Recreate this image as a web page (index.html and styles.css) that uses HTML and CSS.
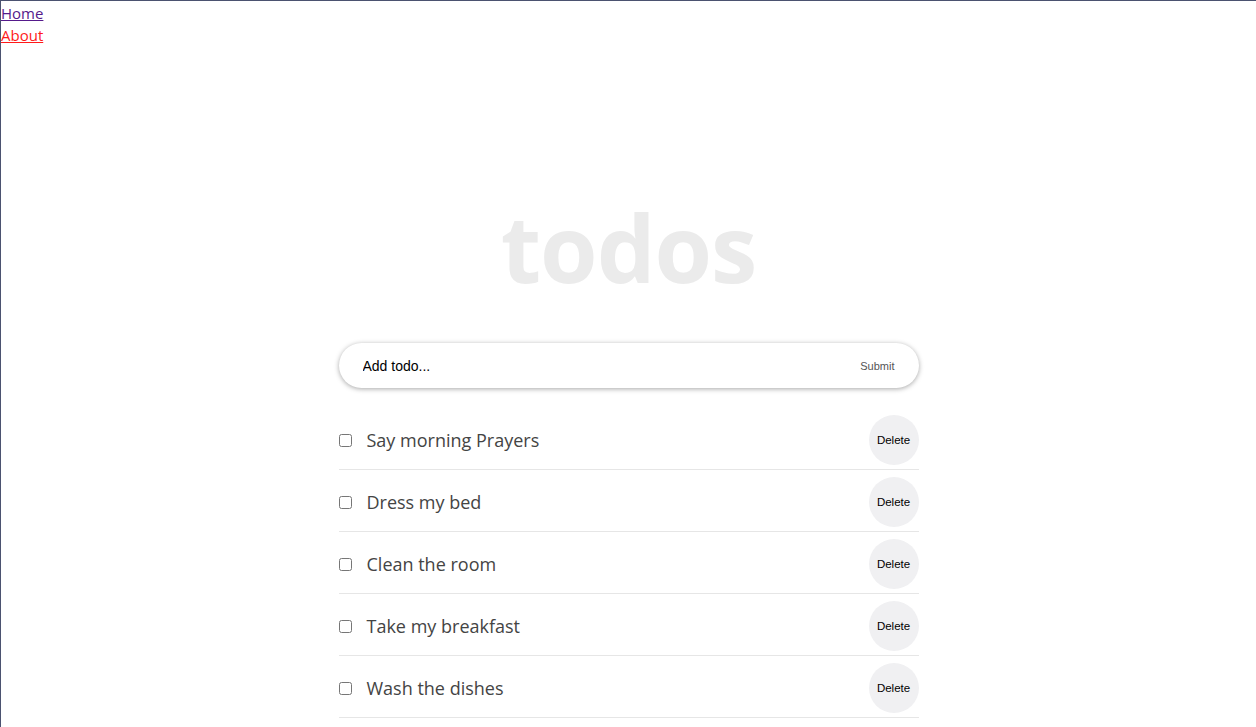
FILE: index.html
```html
<!DOCTYPE html>
<html>
<head>
<meta charset="utf-8">
<link rel="stylesheet" href="styles.css">
</head>
<body>
<nav class="nav">
  <div><a class="nav-link visited" href="#">Home</a></div>
  <div><a class="nav-link active" href="#">About</a></div>
</nav>
<main class="app">
  <h1 class="title">todos</h1>
  <form class="add-form">
    <input class="add-input" type="text" placeholder="Add todo...">
    <button class="submit-btn" type="button">Submit</button>
  </form>
  <ul class="todo-list">
    <li class="todo"><input class="todo-check" type="checkbox"><span class="todo-text">Say morning Prayers</span><button class="delete-btn" type="button">Delete</button></li>
    <li class="todo"><input class="todo-check" type="checkbox"><span class="todo-text">Dress my bed</span><button class="delete-btn" type="button">Delete</button></li>
    <li class="todo"><input class="todo-check" type="checkbox"><span class="todo-text">Clean the room</span><button class="delete-btn" type="button">Delete</button></li>
    <li class="todo"><input class="todo-check" type="checkbox"><span class="todo-text">Take my breakfast</span><button class="delete-btn" type="button">Delete</button></li>
    <li class="todo"><input class="todo-check" type="checkbox"><span class="todo-text">Wash the dishes</span><button class="delete-btn" type="button">Delete</button></li>
  </ul>
</main>
</body>
</html>
```
FILE: styles.css
```css
html, body {
  margin: 0;
  padding: 0;
  background: #fff;
}
body {
  border-top: 1px solid #4b5270;
  border-left: 1px solid #4b5270;
  min-height: 727px;
  box-sizing: border-box;
  font-family: "Open Sans", "Noto Sans", sans-serif;
}
.nav {
  font-size: 15px;
  line-height: 22px;
  padding-top: 1px;
}
.nav-link.visited { color: #551a8b; }
.nav-link.active { color: #ff1a1a; }
.app {
  width: 580px;
  margin: 0 auto;
}
.title {
  margin: 146px 0 41px;
  text-align: center;
  font-size: 93px;
  line-height: 110px;
  font-weight: 700;
  color: #ebebeb;
  letter-spacing: -1px;
}
.add-form {
  display: flex;
  align-items: center;
  height: 45px;
  border-radius: 25px;
  background: #fff;
  box-shadow: 0 1px 5px rgba(0,0,0,0.35);
  padding: 0 24px;
  box-sizing: border-box;
}
.add-input {
  flex: 1;
  border: none;
  outline: none;
  background: transparent;
  font-family: "Liberation Sans", Arial, sans-serif;
  font-size: 14px;
  padding: 0;
}
.add-input::placeholder { color: #000; }
.submit-btn {
  border: none;
  background: transparent;
  font-family: "Liberation Sans", Arial, sans-serif;
  font-size: 11px;
  color: #555;
  padding: 0;
}
.todo-list {
  list-style: none;
  margin: 20px 0 0;
  padding: 0;
}
.todo {
  display: flex;
  align-items: center;
  padding: 7px 0 4px;
  border-bottom: 1px solid #e6e6e6;
}
.todo-check {
  width: 13px;
  height: 13px;
  margin: 0 15px 0 0;
}
.todo-text {
  flex: 1;
  font-size: 18px;
  color: #444;
}
.delete-btn {
  width: 50px;
  height: 50px;
  border-radius: 50%;
  border: none;
  background: #f0f0f2;
  font-family: "Liberation Sans", Arial, sans-serif;
  font-size: 11.5px;
  color: #000;
  padding: 0;
}
```
